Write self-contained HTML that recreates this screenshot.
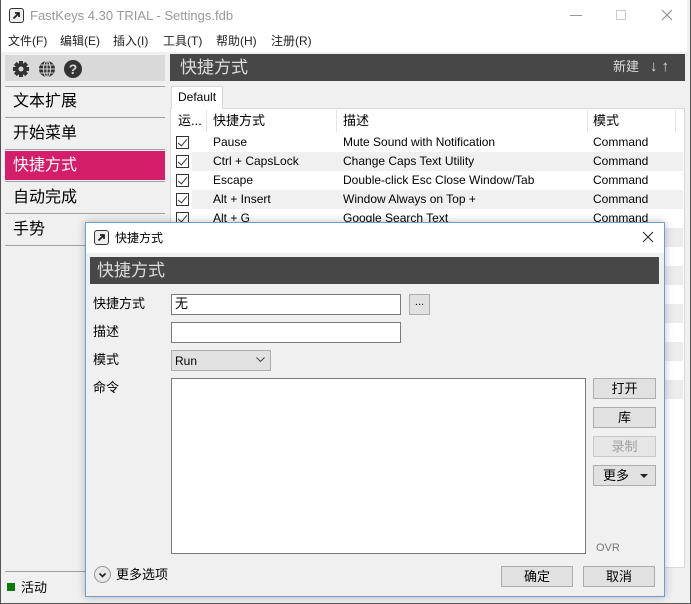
<!DOCTYPE html>
<html><head><meta charset="utf-8"><style>
*{margin:0;padding:0;box-sizing:border-box}
body{width:691px;height:604px;overflow:hidden;background:#f0f0f0;font-family:"Liberation Sans","Noto Sans CJK SC",sans-serif;font-size:12px;color:#000;position:relative}
.a{position:absolute}
.t{white-space:nowrap;line-height:1}
.sep{position:absolute;left:5px;width:160px;height:1px;background:#a0a0a0}
.nav{position:absolute;left:13px;font-size:16px;line-height:1;white-space:nowrap}
.row{position:absolute;left:170px;width:513px;height:19px;font-size:12px}
.row span{position:absolute;top:3px;white-space:nowrap;line-height:1}
.cb{position:absolute;left:6px;top:3px;width:13px;height:13px;border:1px solid #333;background:#fff}
.cb:after{content:"";position:absolute;left:3px;top:0px;width:4px;height:8px;border:solid #333;border-width:0 1.3px 1.3px 0;transform:rotate(40deg)}
.btn{position:absolute;background:#e1e1e1;border:1px solid #adadad;text-align:center;font-size:13px;line-height:19px}
.inp{position:absolute;background:#fff;border:1px solid #7a7a7a}
.m{position:absolute;top:35px;font-size:12px;color:#222;white-space:nowrap;line-height:1}
</style></head><body>
<div class="a" style="left:0;top:0;width:691px;height:604px;border:1px solid #555;border-top:none"></div>
<div class="a" style="left:1px;top:0;width:686px;height:52px;background:#fff"></div>
<div class="a" style="left:9px;top:8px;width:15px;height:15px;border:1.5px solid #333;border-radius:3px;background:#eee"></div>
<svg class="a" style="left:9px;top:8px" width="15" height="15"><path d="M4.5 10.5L10 5M6 5h4v4" stroke="#222" stroke-width="1.8" fill="none"/></svg>
<div class="a t" style="left:30px;top:9px;font-size:13px;color:#999">FastKeys 4.30 TRIAL - Settings.fdb</div>
<div class="a" style="left:570px;top:15px;width:12px;height:1px;background:#999"></div>
<div class="a" style="left:616px;top:10px;width:10px;height:10px;border:1px solid #ccc"></div>
<svg class="a" style="left:661px;top:9px" width="12" height="12"><path d="M1 1L11 11M11 1L1 11" stroke="#888" stroke-width="1"/></svg>
<div class="m" style="left:8px">文件(F)</div>
<div class="m" style="left:60px">编辑(E)</div>
<div class="m" style="left:113px">插入(I)</div>
<div class="m" style="left:163px">工具(T)</div>
<div class="m" style="left:216px">帮助(H)</div>
<div class="m" style="left:271px">注册(R)</div>
<div class="a" style="left:5px;top:55px;width:160px;height:26px;background:#d9d9d9"></div>
<svg class="a" style="left:11px;top:59px" width="20" height="20" viewBox="0 0 20 20"><g fill="#333"><circle cx="10" cy="10" r="6"/><rect x="8" y="2" width="4" height="16"/><rect x="2" y="8" width="16" height="4"/><rect x="8" y="2" width="4" height="16" transform="rotate(45 10 10)"/><rect x="8" y="2" width="4" height="16" transform="rotate(-45 10 10)"/></g><circle cx="10" cy="10" r="2.5" fill="#d9d9d9"/></svg>
<svg class="a" style="left:37px;top:59px" width="20" height="20" viewBox="0 0 20 20"><circle cx="10" cy="10" r="8" fill="#333"/><g stroke="#d9d9d9" stroke-width="1" fill="none"><ellipse cx="10" cy="10" rx="3.5" ry="8"/><path d="M10 2v16M2 10h16M3.5 6h13M3.5 14h13"/></g></svg>
<svg class="a" style="left:63px;top:59px" width="20" height="20" viewBox="0 0 20 20"><circle cx="10" cy="10" r="9" fill="#333"/><text x="10" y="15" text-anchor="middle" font-family="Liberation Sans" font-weight="bold" font-size="14" fill="#d9d9d9">?</text></svg>
<div class="sep" style="top:86px"></div>
<div class="nav" style="top:94px">文本扩展</div>
<div class="sep" style="top:117px"></div>
<div class="nav" style="top:126px">开始菜单</div>
<div class="sep" style="top:149px"></div>
<div class="a" style="left:5px;top:151px;width:160px;height:29px;background:#d41e6a"></div>
<div class="nav" style="top:158px;color:#fff">快捷方式</div>
<div class="sep" style="top:181px"></div>
<div class="nav" style="top:190px">自动完成</div>
<div class="sep" style="top:213px"></div>
<div class="nav" style="top:222px">手势</div>
<div class="sep" style="top:245px"></div>
<div class="sep" style="top:571px"></div>
<div class="a" style="left:7px;top:583px;width:8px;height:8px;background:#0a7a0a"></div>
<div class="a t" style="left:21px;top:581px;font-size:13px">活动</div>
<div class="a" style="left:170px;top:54px;width:515px;height:27px;background:#474747"></div>
<div class="a t" style="left:180px;top:59px;font-size:17px;color:#ddd">快捷方式</div>
<div class="a t" style="left:613px;top:60px;font-size:13px;color:#ddd">新建</div>
<div class="a t" style="left:650px;top:59px;font-size:15px;color:#ddd;font-weight:bold;letter-spacing:4px">↓↑</div>
<div class="a" style="left:170px;top:108px;width:515px;height:460px;background:#fff;border:1px solid #d9d9d9"></div>
<div class="a" style="left:171px;top:86px;width:52px;height:23px;background:#fff;border:1px solid #d9d9d9;border-bottom:none"></div>
<div class="a t" style="left:178px;top:91px;font-size:12px">Default</div>
<div class="a t" style="left:178px;top:114px;font-size:13px">运...</div>
<div class="a" style="left:206px;top:110px;width:1px;height:22px;background:#e5e5e5"></div>
<div class="a t" style="left:213px;top:114px;font-size:13px">快捷方式</div>
<div class="a" style="left:336px;top:110px;width:1px;height:22px;background:#e5e5e5"></div>
<div class="a t" style="left:343px;top:114px;font-size:13px">描述</div>
<div class="a" style="left:587px;top:110px;width:1px;height:22px;background:#e5e5e5"></div>
<div class="a t" style="left:593px;top:114px;font-size:13px">模式</div>
<div class="a" style="left:675px;top:110px;width:1px;height:22px;background:#e5e5e5"></div>
<div class="row" style="top:133px"><div class="cb"></div><span style="left:43px">Pause</span><span style="left:173px">Mute Sound with Notification</span><span style="left:423px">Command</span></div>
<div class="row" style="top:152px"><div class="a" style="left:22px;top:0;width:491px;height:19px;background:#f0f0f0"></div><div class="cb"></div><span style="left:43px">Ctrl + CapsLock</span><span style="left:173px">Change Caps Text Utility</span><span style="left:423px">Command</span></div>
<div class="row" style="top:171px"><div class="cb"></div><span style="left:43px">Escape</span><span style="left:173px">Double-click Esc Close Window/Tab</span><span style="left:423px">Command</span></div>
<div class="row" style="top:190px"><div class="a" style="left:22px;top:0;width:491px;height:19px;background:#f0f0f0"></div><div class="cb"></div><span style="left:43px">Alt + Insert</span><span style="left:173px">Window Always on Top +</span><span style="left:423px">Command</span></div>
<div class="row" style="top:209px"><div class="cb"></div><span style="left:43px">Alt + G</span><span style="left:173px">Google Search Text</span><span style="left:423px">Command</span></div>
<div class="a" style="left:664px;top:228px;width:19px;height:19px;background:#ececec"></div>
<div class="a" style="left:664px;top:266px;width:19px;height:19px;background:#ececec"></div>
<div class="a" style="left:664px;top:304px;width:19px;height:19px;background:#ececec"></div>
<div class="a" style="left:664px;top:342px;width:19px;height:19px;background:#ececec"></div>
<div class="a" style="left:664px;top:380px;width:19px;height:19px;background:#ececec"></div>
<div class="a" style="left:85px;top:222px;width:580px;height:375px;background:#f0f0f0;border:1px solid #6a9fcf;box-shadow:0 0 8px rgba(0,0,0,.25)"></div>
<div class="a" style="left:86px;top:223px;width:578px;height:30px;background:#fff"></div>
<div class="a" style="left:94px;top:230px;width:15px;height:15px;border:1.5px solid #333;border-radius:3px;background:#eee"></div>
<svg class="a" style="left:94px;top:230px" width="15" height="15"><path d="M4.5 10.5L10 5M6 5h4v4" stroke="#222" stroke-width="1.8" fill="none"/></svg>
<div class="a t" style="left:115px;top:232px;font-size:12px">快捷方式</div>
<svg class="a" style="left:642px;top:231px" width="12" height="12"><path d="M1 1L11 11M11 1L1 11" stroke="#222" stroke-width="1"/></svg>
<div class="a" style="left:90px;top:257px;width:569px;height:27px;background:#474747"></div>
<div class="a t" style="left:97px;top:262px;font-size:17px;color:#ddd">快捷方式</div>
<div class="a t" style="left:93px;top:297px;font-size:13px">快捷方式</div>
<div class="inp" style="left:171px;top:294px;width:230px;height:21px"></div>
<div class="a t" style="left:175px;top:297px;font-size:13px">无</div>
<div class="btn" style="left:409px;top:294px;width:21px;height:21px;line-height:14px;font-size:11px">...</div>
<div class="a t" style="left:93px;top:325px;font-size:13px">描述</div>
<div class="inp" style="left:171px;top:322px;width:230px;height:21px"></div>
<div class="a t" style="left:93px;top:353px;font-size:13px">模式</div>
<div class="a" style="left:171px;top:350px;width:100px;height:21px;background:#e1e1e1;border:1px solid #adadad"></div>
<div class="a t" style="left:175px;top:355px;font-size:12px">Run</div>
<svg class="a" style="left:256px;top:357px" width="9" height="6"><path d="M0.5 0.5L4.5 4.5L8.5 0.5" stroke="#444" fill="none"/></svg>
<div class="a t" style="left:93px;top:381px;font-size:13px">命令</div>
<div class="inp" style="left:171px;top:378px;width:415px;height:176px"></div>
<div class="btn" style="left:593px;top:378px;width:63px;height:21px">打开</div>
<div class="btn" style="left:593px;top:407px;width:63px;height:21px">库</div>
<div class="btn" style="left:593px;top:436px;width:63px;height:21px;color:#a0a0a0;border-color:#c8c8c8;background:#e6e6e6">录制</div>
<div class="btn" style="left:593px;top:465px;width:63px;height:21px;text-align:left;padding-left:9px">更多</div>
<svg class="a" style="left:640px;top:474px" width="8" height="5"><path d="M0 0h8L4 4z" fill="#222"/></svg>
<div class="a t" style="left:596px;top:543px;font-size:11px;color:#777">OVR</div>
<div class="a" style="left:94px;top:566px;width:17px;height:17px;border-radius:50%;background:#e8e8e8;border:1px solid #999"></div>
<svg class="a" style="left:94px;top:566px" width="17" height="17"><path d="M5.5 7.5L8.5 10.5L11.5 7.5" stroke="#222" stroke-width="1.6" fill="none"/></svg>
<div class="a t" style="left:116px;top:568px;font-size:13px">更多选项</div>
<div class="btn" style="left:501px;top:566px;width:72px;height:21px">确定</div>
<div class="btn" style="left:583px;top:566px;width:72px;height:21px">取消</div>
</body></html>
